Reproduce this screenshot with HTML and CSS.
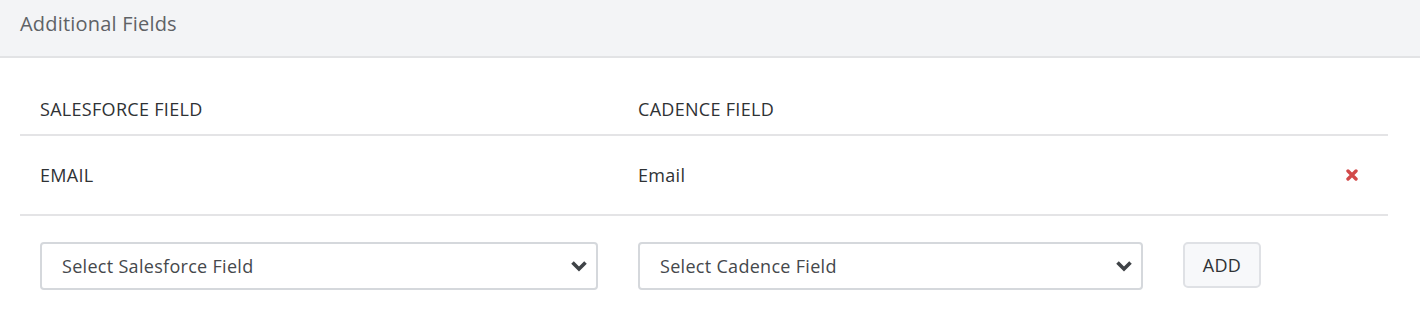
FILE: index.html
```html
<!DOCTYPE html>
<html lang="en">
<head>
    <meta charset="UTF-8">
    <meta name="viewport" content="width=device-width, initial-scale=1.0">
    <title>Additional Fields</title>
    <link rel="stylesheet" href="styles.css">
</head>
<body>

    <div class="panel">
        <div class="panel-heading">Additional Fields</div>

        <div class="panel-body">
            <!-- Cabecera de la tabla -->
            <div class="field-row field-head">
                <div class="cell">SALESFORCE FIELD</div>
                <div class="cell">CADENCE FIELD</div>
                <div class="cell"></div>
            </div>

            <div class="field-row">
                <div class="cell">EMAIL</div>
                <div class="cell">Email</div>
                <div class="cell cell-action">
                    <svg class="remove" width="12" height="12" viewBox="0 0 12 12">
                        <path d="M2 2 L10 10 M10 2 L2 10" stroke="#d24a4a" stroke-width="3.4" stroke-linecap="round"/>
                    </svg>
                </div>
            </div>

            <!-- Fila para añadir campos -->
            <div class="add-row">
                <div class="add-cell">
                    <div class="select-box">
                        <span>Select Salesforce Field</span>
                        <svg class="chevron" width="18" height="12" viewBox="0 0 18 12">
                            <path d="M2.5 2.5 L9 9 L15.5 2.5" fill="none" stroke="#3f4347" stroke-width="3.6"/>
                        </svg>
                    </div>
                </div>
                <div class="add-cell add-cell-mid">
                    <div class="select-box">
                        <span>Select Cadence Field</span>
                        <svg class="chevron" width="18" height="12" viewBox="0 0 18 12">
                            <path d="M2.5 2.5 L9 9 L15.5 2.5" fill="none" stroke="#3f4347" stroke-width="3.6"/>
                        </svg>
                    </div>
                </div>
                <div class="add-cell">
                    <button class="btn-add">ADD</button>
                </div>
            </div>
        </div>
    </div>

</body>
</html>
```

FILE: styles.css
```css
body {
    margin: 0;
    padding: 0;
    background-color: #ffffff;
    font-family: 'Open Sans', 'Liberation Sans', sans-serif;
    color: #2f3235;
}

.panel-heading {
    height: 56px;
    line-height: 48px;
    padding: 0 20px;
    background-color: #f3f4f6;
    border-bottom: 2px solid #e2e3e5;
    font-size: 20px;
    letter-spacing: 0.2px;
    color: #5f6266;
}

.panel-body {
    padding: 20px 32px 0 20px;
}

/* Filas de la tabla */
.field-row {
    display: grid;
    grid-template-columns: 598px 1fr 70px;
    border-bottom: 2px solid #e4e4e6;
    font-size: 18px;
    letter-spacing: 0.3px;
    line-height: 24px;
}

.field-row .cell {
    padding: 27px 20px;
}

.field-head .cell {
    padding: 19px 20px 13px;
}

.cell-action {
    display: flex;
    justify-content: flex-end;
    align-items: center;
    padding-right: 30px !important;
}

.remove {
    display: block;
}

/* Fila con los selects */
.add-row {
    display: grid;
    grid-template-columns: 598px 545px 1fr;
    padding-top: 26px;
}

.add-cell {
    padding: 0 20px;
}

.select-box {
    height: 48px;
    box-sizing: border-box;
    border: 2px solid #d5d8dc;
    border-radius: 4px;
    display: flex;
    align-items: center;
    justify-content: space-between;
    padding: 0 8px 0 20px;
    font-size: 18px;
    letter-spacing: 0.3px;
    color: #45484c;
}

.chevron {
    display: block;
}

.btn-add {
    width: 78px;
    height: 46px;
    background-color: #f7f8fa;
    border: 2px solid #dfe1e5;
    border-radius: 5px;
    font-family: 'Open Sans', 'Liberation Sans', sans-serif;
    font-size: 18px;
    letter-spacing: 0.3px;
    color: #2f3235;
    cursor: pointer;
    padding: 0;
}
```
